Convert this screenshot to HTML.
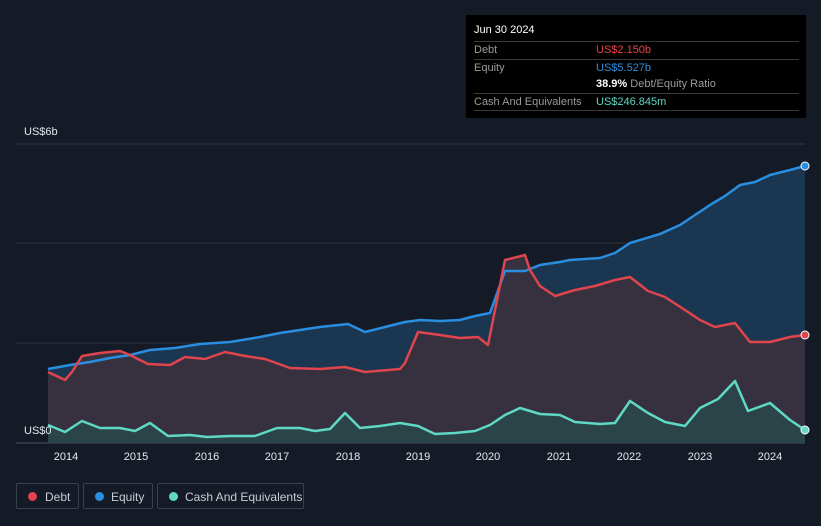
<!DOCTYPE html>
<html><head><style>
body{margin:0;width:821px;height:526px;background:#151b26;font-family:"Liberation Sans",sans-serif;overflow:hidden;position:relative}
.tip{position:absolute;left:466px;top:15px;width:340px;height:103px;background:#000;color:#fff;font-size:11px}
.tip .r{position:absolute;left:8px;right:7px;border-top:1px solid #3a3a3a;height:17px;line-height:17px;color:#9a9a9a}
.tip .v{position:absolute;left:122px}
.leg{position:absolute;top:483px;height:26px;border:1px solid #3a404c;border-radius:2px;color:#c9ccd2;font-size:12px;line-height:26px;box-sizing:border-box}
.leg i{position:absolute;top:8px;width:9px;height:9px;border-radius:50%}
.ax{position:absolute;top:451px;color:#e4e6ea;font-size:11px;width:40px;text-align:center}
</style></head><body>
<svg width="821" height="526" style="position:absolute;left:0;top:0">
<line x1="16" y1="144" x2="805" y2="144" stroke="#2e3440"/>
<line x1="16" y1="243" x2="805" y2="243" stroke="#2e3440"/>
<line x1="16" y1="343" x2="805" y2="343" stroke="#2e3440"/>
<line x1="16" y1="443" x2="805" y2="443" stroke="#4a505c"/>
<polygon fill="#1a3650" points="48,369 70,365 90,362 110,358 130,355 150,350 175,348 200,344 230,342 260,337 280,333 300,330 320,327 348,324 365,332 385,327 405,322 420,320 440,321 460,320 475,316 490,313 505,271 525,271 540,265 560,262 570,260 600,258 615,253 630,243 660,234 680,225 710,205 725,196 740,185 755,182 770,175 790,170 805,166 805,443 48,443"/>
<polygon fill="#37313f" points="48,372 65,380 72,372 82,356 100,353 120,351 130,355 148,364 170,365 185,357 205,359 225,352 245,356 265,359 290,368 320,369 345,367 365,372 400,369 405,363 418,332 440,335 460,338 478,337 488,345 505,260 525,255 530,270 540,286 555,296 575,290 595,286 615,280 630,277 648,291 665,297 685,310 700,320 715,327 735,323 750,342 770,342 790,337 805,335 805,443 48,443"/>
<polygon fill="#2a4448" points="48,425 65,432 82,421 100,428 120,428 135,431 150,423 168,436 190,435 207,437 230,436 255,436 277,428 300,428 315,431 330,429 345,413 360,428 380,426 400,423 418,426 435,434 455,433 475,431 490,425 505,415 520,408 540,414 560,415 575,422 600,424 615,423 630,401 648,413 665,422 685,426 700,408 718,399 735,381 748,411 770,403 790,420 805,430 805,443 48,443"/>
<g fill="none" stroke-width="2.5" stroke-linejoin="round">
<polyline stroke="#2a8ee0" points="48,369 70,365 90,362 110,358 130,355 150,350 175,348 200,344 230,342 260,337 280,333 300,330 320,327 348,324 365,332 385,327 405,322 420,320 440,321 460,320 475,316 490,313 505,271 525,271 540,265 560,262 570,260 600,258 615,253 630,243 660,234 680,225 710,205 725,196 740,185 755,182 770,175 790,170 805,166"/>
<polyline stroke="#e0444c" points="48,372 65,380 72,372 82,356 100,353 120,351 130,355 148,364 170,365 185,357 205,359 225,352 245,356 265,359 290,368 320,369 345,367 365,372 400,369 405,363 418,332 440,335 460,338 478,337 488,345 505,260 525,255 530,270 540,286 555,296 575,290 595,286 615,280 630,277 648,291 665,297 685,310 700,320 715,327 735,323 750,342 770,342 790,337 805,335"/>
<polyline stroke="#5fd9c4" points="48,425 65,432 82,421 100,428 120,428 135,431 150,423 168,436 190,435 207,437 230,436 255,436 277,428 300,428 315,431 330,429 345,413 360,428 380,426 400,423 418,426 435,434 455,433 475,431 490,425 505,415 520,408 540,414 560,415 575,422 600,424 615,423 630,401 648,413 665,422 685,426 700,408 718,399 735,381 748,411 770,403 790,420 805,430"/>
</g>
<circle cx="805" cy="166" r="4" fill="#2a8ee0" stroke="#fff" stroke-width="1"/>
<circle cx="805" cy="335" r="4" fill="#e0444c" stroke="#fff" stroke-width="1"/>
<circle cx="805" cy="430" r="4" fill="#5fd9c4" stroke="#fff" stroke-width="1"/>
</svg>
<div style="position:absolute;left:24px;top:126px;color:#e4e6ea;font-size:11px">US$6b</div>
<div style="position:absolute;left:24px;top:425px;color:#e4e6ea;font-size:11px">US$0</div>
<div class="ax" style="left:46px">2014</div><div class="ax" style="left:116px">2015</div><div class="ax" style="left:187px">2016</div><div class="ax" style="left:257px">2017</div><div class="ax" style="left:328px">2018</div><div class="ax" style="left:398px">2019</div><div class="ax" style="left:468px">2020</div><div class="ax" style="left:539px">2021</div><div class="ax" style="left:609px">2022</div><div class="ax" style="left:680px">2023</div><div class="ax" style="left:750px">2024</div>
<div class="tip">
<div style="position:absolute;left:8px;top:9px;font-size:11px">Jun 30 2024</div>
<div class="r" style="top:26px">Debt<span class="v" style="color:#e8444c">US$2.150b</span></div>
<div class="r" style="top:44px">Equity<span class="v" style="color:#2a8ee0">US$5.527b</span></div>
<div class="r" style="top:61px;border-top:none"><span class="v" style="color:#fff;font-weight:bold">38.9%<span style="color:#9a9a9a;font-weight:normal"> Debt/Equity Ratio</span></span></div>
<div class="r" style="top:78px">Cash And Equivalents<span class="v" style="color:#5fd9c4">US$246.845m</span></div>
<div class="r" style="top:95px;height:0"></div>
</div>
<div class="leg" style="left:16px;width:63px"><i style="left:11px;background:#e0444c"></i><span style="position:absolute;left:28px">Debt</span></div>
<div class="leg" style="left:83px;width:70px"><i style="left:11px;background:#2a8ee0"></i><span style="position:absolute;left:27px">Equity</span></div>
<div class="leg" style="left:157px;width:147px"><i style="left:11px;background:#5fd9c4"></i><span style="position:absolute;left:27px">Cash And Equivalents</span></div>
</body></html>
